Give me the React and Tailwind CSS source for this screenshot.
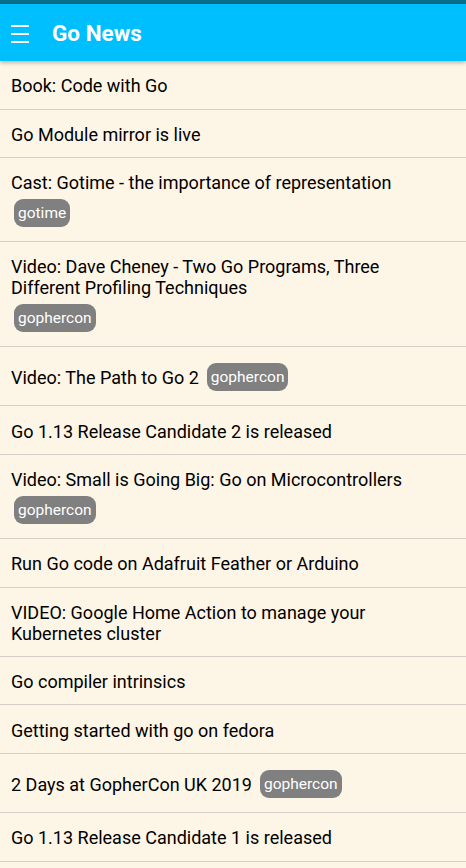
import React from 'react';

const items = [
  { title: 'Book: Code with Go' },
  { title: 'Go Module mirror is live' },
  { title: 'Cast: Gotime - the importance of representation', tag: 'gotime' },
  { title: 'Video: Dave Cheney - Two Go Programs, Three Different Profiling Techniques', tag: 'gophercon' },
  { title: 'Video: The Path to Go 2', tag: 'gophercon' },
  { title: 'Go 1.13 Release Candidate 2 is released' },
  { title: 'Video: Small is Going Big: Go on Microcontrollers', tag: 'gophercon' },
  { title: 'Run Go code on Adafruit Feather or Arduino' },
  { title: 'VIDEO: Google Home Action to manage your Kubernetes cluster' },
  { title: 'Go compiler intrinsics' },
  { title: 'Getting started with go on fedora' },
  { title: '2 Days at GopherCon UK 2019', tag: 'gophercon' },
  { title: 'Go 1.13 Release Candidate 1 is released' },
];

function Row({ title, tag }) {
  return (
    <div className="flex min-h-[48.7px] flex-wrap items-center gap-x-[5px] gap-y-[4px] border-b border-[#d4d0c8] pl-[11px] pr-[18px] pt-[14px] pb-[12px] text-[18px] leading-[21px] text-black">
      <span>{title}</span>
      {tag && (
        <span className="ml-[3px] my-[2px] rounded-[9px] bg-[#808080] px-[4px] py-[5px] text-[15.5px] leading-[18px] text-white">
          {tag}
        </span>
      )}
    </div>
  );
}

export default function App() {
  return (
    <div className="h-[868px] overflow-hidden bg-[#fdf5e6]" style={{ fontFamily: 'Roboto, "Noto Sans", sans-serif' }}>
      <div className="h-[4px] bg-[#086f8c]" />
      <div className="relative z-10 flex h-[57px] items-center bg-[#00bfff] pt-[2px] shadow-[0_2px_4px_rgba(0,0,0,0.25)]">
        <div className="ml-[11px] flex w-[18px] flex-col gap-[6px]">
          <div className="h-[2px] bg-white" />
          <div className="h-[2px] bg-white" />
          <div className="h-[2px] bg-white" />
        </div>
        <h1 className="ml-[23px] text-[22.5px] font-bold text-white">Go News</h1>
      </div>
      <div>
        {items.map((item, i) => (
          <Row key={i} {...item} />
        ))}
      </div>
    </div>
  );
}
